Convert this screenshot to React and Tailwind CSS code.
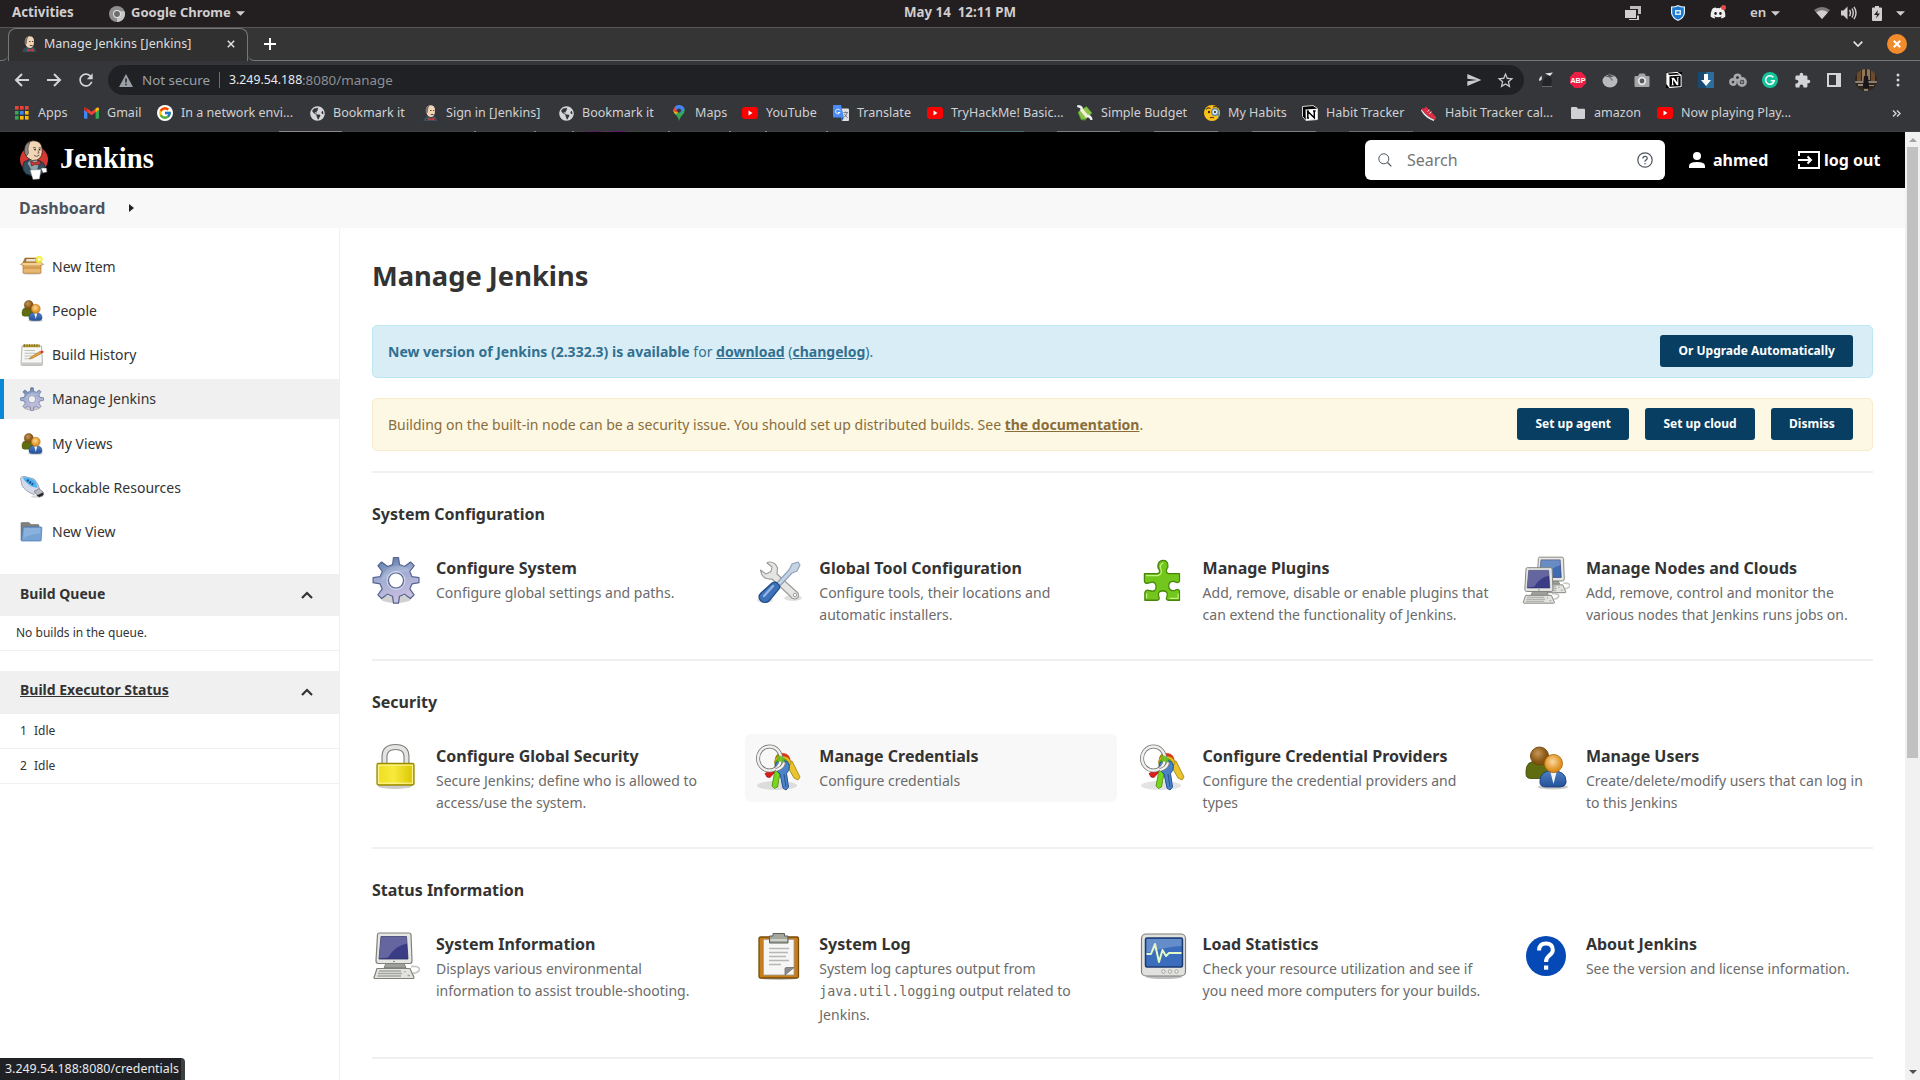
import React from "react";
import { FcGoogle } from "react-icons/fc";
import { FaGlobeAmericas, FaDiscord } from "react-icons/fa";
import { SiNotion } from "react-icons/si";
import { MdExtension, MdRefresh, MdSend, MdStarBorder } from "react-icons/md";

/* ---------- Browser icons ---------- */

function Butler({ className }) {
  return (
    <svg viewBox="0 0 28 40" className={className}>
      <ellipse cx="14" cy="19.500" rx="14" ry="13.500" fill="#d33833" />
      <path d="M4 22 Q2 26 3 30 L6 34 L12 36 L22 34 L25 27 Q25 23 20 21 L10 19Z" fill="#335061" stroke="#16202c" strokeWidth="0.700" />
      <path d="M7.500 23 L11 20 L17 20 L19 23 L17 30 L12 31Z" fill="#8fa3ad" />
      <path d="M5 9 Q5 1.500 13 0.700 Q21 0.500 22 8 Q23.500 17 17 20 Q12 22 8 18 Q4 15 5 9Z" fill="#f0d6b7" stroke="#2b2420" strokeWidth="0.800" />
      <path d="M4.700 13 Q3.500 4 10 2 Q8 6 8 9 L8.500 13 Q7.500 15 6.500 16Z" fill="#8b8b86" stroke="#2b2420" strokeWidth="0.500" />
      <path d="M13 8 Q14.500 7 16 8 M18.500 8 Q20 7.200 21 8.200" stroke="#4a352a" strokeWidth="0.800" fill="none" />
      <circle cx="15" cy="9.600" r="0.900" fill="#222" />
      <circle cx="19.600" cy="9.600" r="0.900" fill="#222" />
      <path d="M14 15.500 Q17 17.500 19.500 15 M18 10.500 L19 13 L17.500 13.200" stroke="#5b3a2c" strokeWidth="0.800" fill="none" />
      <path d="M10.500 21 L15 23 L20 20.500 L20.300 25 L15.300 24.300 L11.500 26Z" fill="#d33833" stroke="#5e0d0d" strokeWidth="0.600" />
      <path d="M10 30 L21 29.500 L19.500 39 L13 39.500Z" fill="#fff" stroke="#777" strokeWidth="0.500" />
      <path d="M21 28 L26.500 28 L27 32 L23 33Z" fill="#fff" stroke="#555" strokeWidth="0.500" />
    </svg>
  );
}

const ButlerSmall = () => (
  <svg viewBox="0 0 16 16" className="size-4">
    <path d="M1.500 16 Q2 12 6 11 L12 11 Q15 12 15 16Z" fill="#335061" />
    <path d="M4 5.500 Q4 0.500 8.500 0.300 Q13 0.500 13 5 Q13.300 11.500 9 12 Q4.500 11.500 4 5.500Z" fill="#f0d6b7" />
    <path d="M3.600 7.500 Q3 1.500 7.500 0.500 Q6 3 6 5 L5.700 8Z" fill="#77736c" />
    <path d="M8 5.500h1.500M11 5.500h1.300M8.800 9.500h2.700" stroke="#4a352a" strokeWidth="0.900" />
    <path d="M6 12.500 L9 13.700 L12.500 12.300 L12.500 15.500 L9 14.500 L6.500 15.800Z" fill="#d33833" />
  </svg>
);

const AppsGrid = () => {
  const colors = ["#ea4335", "#ea4335", "#ea4335", "#34a853", "#4285f4", "#fbbc04", "#34a853", "#fbbc04", "#fbbc04"];
  return (
    <svg viewBox="0 0 14 14" className="size-3.5">
      {colors.map((c, i) => (
        <rect key={i} x={(i % 3) * 5} y={Math.floor(i / 3) * 5} width="3.600" height="3.600" fill={c} />
      ))}
    </svg>
  );
};

const Gmail = () => (
  <svg viewBox="0 0 16 12" className="h-3 w-[15px]">
    <path d="M0 1.500V11Q0 12 1 12H3.600V5Z" fill="#4285f4" />
    <path d="M16 1.500V11Q16 12 15 12H12.400V5Z" fill="#34a853" />
    <path d="M0 1.500Q0.500-0.300 2.300 0.300L8 4.600 13.700 0.300Q15.500-0.300 16 1.500V2.600L8 8.500 0 2.600Z" fill="#ea4335" />
    <path d="M12.400 1.300 13.700 0.300Q15.500-0.300 16 1.500V2.600L12.400 5.300Z" fill="#fbbc04" />
    <path d="M0 2.600 3.600 5.200V1.300L2.300 0.300Q0.500-0.300 0 1.500Z" fill="#c5221f" />
  </svg>
);

const GoogleDot = () => (
  <span className="flex size-4 items-center justify-center rounded-full bg-white">
    <FcGoogle className="size-3.5" />
  </span>
);

const Globe = () => <FaGlobeAmericas className="size-[15px] text-[#d5d6d8]" />;

const MapsPin = () => (
  <svg viewBox="0 0 12 16" className="h-4 w-3">
    <path d="M6 16Q5.500 12.500 3 10 0 7 0.400 5L6 5.500 11.700 4Q12.300 7 9 10.500 6.500 13 6 16Z" fill="#34a853" />
    <path d="M0.400 4.500Q0 7 2.500 9.500L7 5Z" fill="#fbbc04" />
    <path d="M1.600 2Q0.300 3.500 0.300 5.500L3 7.500 6 5Z" fill="#ea4335" />
    <path d="M1.600 2Q3.500-0.300 6.500 0.100 10.500 0.700 11.700 4L7.500 8 3.500 5Z" fill="#4285f4" />
    <circle cx="6" cy="5.600" r="2.100" fill="#35363a" />
  </svg>
);

const YouTube = () => (
  <svg viewBox="0 0 16 12" className="h-3 w-4">
    <rect width="16" height="12" rx="3" fill="#f00" />
    <path d="M6.500 3.500V8.500L10.500 6Z" fill="#fff" />
  </svg>
);

const TranslateIcon = () => (
  <svg viewBox="0 0 16 16" className="size-4">
    <path d="M6 3.500H15Q16 3.500 16 4.500V15Q16 16 15 16H9Z" fill="#e0e0e0" />
    <path d="M1 0H8L11 12.500H1Q0 12.500 0 11.500V1Q0 0 1 0Z" fill="#4b8bf4" />
    <path d="M8 12.500H11L9 16Z" fill="#1a56c4" />
    <path d="M7 5.500A2.300 2.300 0 1 0 7 7.500H4.800" stroke="#fff" strokeWidth="1" fill="none" />
    <path d="M10.500 7.500H15M12.700 6.500V7.500M14.200 7.500Q13.500 10.500 11 12.500M11.500 9Q12.500 11.500 14.700 12.600" stroke="#6a7480" strokeWidth="0.900" fill="none" />
  </svg>
);

const Money = () => (
  <svg viewBox="0 0 16 16" className="size-4">
    <path d="M1 8 9 2 15 8 8 15.500 4 15Z" fill="#5c9e31" />
    <path d="M1 7 7 3 9.500 1.500 15 8 8 14.500 4 14Z" fill="#8bc34a" stroke="#3f7d20" strokeWidth="0.500" />
    <path d="M4 4 10.500 12" stroke="#f3f0d8" strokeWidth="3.400" />
    <path d="M0.500 0Q5 0 6 3L4 5Q3.500 2.500 0 2ZM15.500 15Q15.500 10.500 11 9.500L10 12Q12.500 12.500 13.500 15Z" fill="#eef2f4" />
  </svg>
);

const Monocle = () => (
  <svg viewBox="0 0 16 16" className="size-4">
    <circle cx="8" cy="8" r="8" fill="#fcc21b" />
    <path d="M2 4.500Q4 2 6.500 3.500M9 2Q12 0.500 14.500 3" stroke="#5d3b1a" strokeWidth="1.200" fill="none" />
    <circle cx="5" cy="7" r="1.200" fill="#3e2a12" />
    <circle cx="11" cy="7" r="3.300" fill="#cfe6f5" stroke="#557f9f" strokeWidth="1.200" />
    <circle cx="11" cy="7" r="1.100" fill="#3e2a12" />
    <path d="M6 13Q8 11.500 10 13" stroke="#5d3b1a" strokeWidth="1.100" fill="none" />
    <path d="M14 8Q15.500 11 14 14" stroke="#557f9f" strokeWidth="0.800" fill="none" />
  </svg>
);

/* White page cube with a bold N on its front face */
const Notion = () => (
  <svg viewBox="0 0 16 16" className="size-4">
    <path d="M0.500 1.500L11 0.500L15.500 3.500V14.500L4 15.500L0.500 11.500Z" fill="#000" stroke="#e9e9e9" strokeWidth="0.900" />
    <path d="M3.500 4.500L15 3.800V14.500L3.800 15.200Z" fill="#fff" />
    <path d="M5.800 13V6.500L12.300 12.800V5.800M4.800 6.300H7M11 6H13.600M4.800 13H7" stroke="#000" strokeWidth="1.500" fill="none" />
  </svg>
);

const Shoe = () => (
  <svg viewBox="0 0 16 16" className="size-4">
    <path d="M1 3Q3 4.500 5 1.500L15 12Q15.500 15 12.500 14.500Q6 11 1.500 6Q0 4 1 3Z" fill="#dd2e44" />
    <path d="M0.500 4.500Q6 12 13.500 14.800L12.500 16Q4 13 0 5.500Z" fill="#e6eaee" />
    <path d="M6.500 6.500 8.500 4.800M8.500 8.500 10.500 6.800" stroke="#fff" strokeWidth="0.900" />
  </svg>
);

const FolderGrey = () => (
  <svg viewBox="0 0 14 12" className="h-3 w-3.5">
    <path d="M0 1Q0 0 1 0H5.500L7 1.800H13Q14 1.800 14 2.800V11Q14 12 13 12H1Q0 12 0 11Z" fill="#cfd0d2" />
  </svg>
);

const bookmarks = [
  ["Apps", AppsGrid, "w-[69px]"],
  ["Gmail", Gmail, "w-[74px]"],
  ["In a network envi...", GoogleDot, "w-[152px]"],
  ["Bookmark it", Globe, "w-[113px]"],
  ["Sign in [Jenkins]", ButlerSmall, "w-[136px]"],
  ["Bookmark it", Globe, "w-[113px]"],
  ["Maps", MapsPin, "w-[71px]"],
  ["YouTube", YouTube, "w-[91px]"],
  ["Translate", TranslateIcon, "w-[94px]"],
  ["TryHackMe! Basic...", YouTube, "w-[150px]"],
  ["Simple Budget", Money, "w-[127px]"],
  ["My Habits", Monocle, "w-[98px]"],
  ["Habit Tracker", Notion, "w-[119px]"],
  ["Habit Tracker cal...", Shoe, "w-[149px]"],
  ["amazon", FolderGrey, "w-[87px]"],
  ["Now playing Play...", YouTube, "w-[140px]"],
];

/* ---------- Extensions ---------- */

const extensions = [
  <svg key="bird" viewBox="0 0 16 16" className="size-4">
    <path d="M5 15Q3 12 6 7Q8 3 12 4L14 8 13 15Z" fill="#232427" />
    <path d="M1 9Q1 5 4 4L3.500 8ZM7 1.500 15 0.500 12 4Z" fill="#e4e4e4" />
    <path d="M4 14.500H14" stroke="#77797c" strokeWidth="0.800" />
  </svg>,
  <svg key="abp" viewBox="0 0 16 16" className="size-4">
    <path d="M4.700 0H11.300L16 4.700V11.300L11.300 16H4.700L0 11.300V4.700Z" fill="#ed1e45" />
    <text x="8" y="10.700" textAnchor="middle" fontSize="7.200" fontWeight="700" fill="#fff" fontFamily="Liberation Sans, sans-serif">ABP</text>
  </svg>,
  <svg key="tomato" viewBox="0 0 16 16" className="size-4">
    <ellipse cx="8" cy="9" rx="7.500" ry="6.500" fill="#b9babb" />
    <path d="M8 5.500 3 4.500 6 3.500 7 0.500 9 3.200 13 4Z" fill="#56585b" />
    <path d="M8 5.500 10.500 8.500" stroke="#77797c" strokeWidth="1.300" />
  </svg>,
  <svg key="camera" viewBox="0 0 16 16" className="size-4">
    <path d="M1.500 4H4L5.500 1.500H10.500L12 4H14.500Q15.500 4 15.500 5V14Q15.500 15 14.500 15H1.500Q0.500 15 0.500 14V5Q0.500 4 1.500 4Z" fill="#a4a5a7" />
    <circle cx="8" cy="9" r="4.200" fill="#e4e4e4" />
    <circle cx="8" cy="9" r="2.400" fill="#55575a" />
  </svg>,
  <SiNotion key="notion" className="size-4 bg-black text-white" />,
  <svg key="down" viewBox="0 0 16 16" className="size-4">
    <rect width="16" height="16" fill="#2a6f9c" />
    <path d="M0 0H8V16H0Z" fill="#174a6e" />
    <path d="M6 2H10V8H13L8 14 3 8H6Z" fill="#fff" />
  </svg>,
  <svg key="rings" viewBox="0 0 18 16" className="h-4 w-[18px]" fill="none" stroke="#a6a8aa" strokeWidth="2.600">
    <circle cx="4" cy="10" r="2.600" />
    <circle cx="8.500" cy="5.500" r="2.800" />
    <circle cx="13" cy="10" r="3.600" />
    <circle cx="13" cy="10" r="1" strokeWidth="1" />
  </svg>,
  <svg key="grammarly" viewBox="0 0 16 16" className="size-4">
    <circle cx="8" cy="8" r="8" fill="#15c39a" />
    <path d="M11.300 5.300A4.300 4.300 0 1 0 12.200 8.700H8.700" stroke="#fff" strokeWidth="1.500" fill="none" />
  </svg>,
  <MdExtension key="puzzle" className="size-[17px] text-[#d3d4d6]" />,
  <svg key="panel" viewBox="0 0 14 14" className="size-3.5">
    <path d="M1 1H13V13H1Z" fill="none" stroke="#d3d4d6" strokeWidth="2" />
    <path d="M9 1H13V13H9Z" fill="#d3d4d6" />
  </svg>,
  <svg key="avatar" viewBox="0 0 22 22" className="size-[22px]">
    <clipPath id="avatarClip"><circle cx="11" cy="11" r="11" /></clipPath>
    <g clipPath="url(#avatarClip)">
      <rect width="22" height="22" fill="#33261b" />
      <path d="M2 0H6V12H2ZM16 0H20V12H16Z" fill="#6b4a2e" />
      <path d="M7 0H10V12H7ZM12 0H15V11H12Z" fill="#8f7759" />
      <path d="M0 12H22V14H0Z" fill="#8a8078" />
      <path d="M9 7H13L14 19H8Z" fill="#17151a" />
      <path d="M3 15H8V17H3ZM14 16H19V17H14ZM9 20H13V22H9Z" fill="#8f867c" />
    </g>
  </svg>,
  <svg key="dots" viewBox="0 0 4 16" className="h-4 w-1" fill="#d3d4d6">
    <circle cx="2" cy="3" r="1.500" /><circle cx="2" cy="8" r="1.500" /><circle cx="2" cy="13" r="1.500" />
  </svg>,
];

/* ---------- Jenkins icons, 48-unit grid ---------- */

function Gear({ className }) {
  return (
    <svg viewBox="0 0 48 48" className={className}>
      <defs>
        <linearGradient id="gearFill" x1="0" y1="0" x2="0.300" y2="1">
          <stop offset="0" stopColor="#4f709f" /><stop offset="0.450" stopColor="#9dabd0" /><stop offset="1" stopColor="#c9bfe0" />
        </linearGradient>
      </defs>
      <ellipse cx="24" cy="43" rx="15" ry="4" fill="#000" opacity="0.180" />
      <path
        fillRule="evenodd"
        d="M21.500 1.500h5l1 7 5 2 6-4.500 3.700 3.700-4.400 5.800 2.200 5.200 7 1v5l-7 1.200-2.200 5 4.300 5.900-3.700 3.700-5.900-4.300-5 2-1 7h-5l-1-7-5-2-6 4.300-3.600-3.600 4.300-6-2.100-5-7-1.200v-5l7-1 2.200-5.200-4.400-5.800 3.700-3.700 6 4.500 5-2zM24 17a7.500 7.500 0 1 0 0 15a7.500 7.500 0 1 0 0-15z"
        fill="url(#gearFill)" stroke="#55648f" strokeWidth="1.200" strokeLinejoin="round"
      />
      <circle cx="24" cy="24.500" r="9" fill="none" stroke="#e0e2ef" strokeWidth="1" opacity="0.800" />
      <path d="M10 25Q18 17 38 15Q34 9 24 10Q12 11 10 25Z" fill="#fff" opacity="0.150" />
    </svg>
  );
}

function People({ className }) {
  return (
    <svg viewBox="0 0 48 48" className={className}>
      <defs>
        <radialGradient id="headBrown" cx="0.400" cy="0.350"><stop offset="0" stopColor="#c79556" /><stop offset="1" stopColor="#85530f" /></radialGradient>
        <radialGradient id="headOrange" cx="0.450" cy="0.400"><stop offset="0" stopColor="#f9d9a0" /><stop offset="1" stopColor="#e08f1c" /></radialGradient>
        <linearGradient id="shirtBlue" x1="0" y1="0" x2="0" y2="1"><stop offset="0" stopColor="#4f80c4" /><stop offset="1" stopColor="#24529a" /></linearGradient>
      </defs>
      <ellipse cx="31" cy="43" rx="15" ry="2.500" fill="#000" opacity="0.200" />
      <path d="M4 27Q4 17 15 17Q26 17 26 27V31Q25 34.500 20 34.500H9Q4 34.500 4 30Z" fill="#5f6c10" stroke="#3d4708" strokeWidth="0.800" />
      <circle cx="17.500" cy="12" r="9" fill="url(#headBrown)" stroke="#6b430d" strokeWidth="0.900" />
      <path d="M18 37Q18 27 30 26.500Q44 27 44 37V39Q43 43 38 43H24Q18.500 43 18 39Z" fill="url(#shirtBlue)" stroke="#1b4079" strokeWidth="0.900" />
      <path d="M28.500 28.500L31.500 40L34.500 28.500Z" fill="#f2f4f8" />
      <circle cx="31.500" cy="19.500" r="9" fill="url(#headOrange)" stroke="#b36a0d" strokeWidth="0.900" />
    </svg>
  );
}

const NewItem = ({ className }) => (
  <svg viewBox="0 0 48 48" className={className}>
    <ellipse cx="24" cy="37" rx="19" ry="2.500" fill="#000" opacity="0.150" />
    <path d="M6 15L42 15V35Q42 36.500 40 36.500H8Q6 36.500 6 35Z" fill="#e8b872" stroke="#a86a1f" strokeWidth="1.300" />
    <path d="M6 24H42V28H6Z" fill="#c98b3c" opacity="0.600" />
    <path d="M10 6H38L42 15H6Z" fill="#a9762f" stroke="#8a5a1b" strokeWidth="1" />
    <path d="M13 8H30L31 13H12Z" fill="#e7e2da" />
    <path d="M6 15 1 19 10 22H38L47 19 42 15Z" fill="#f3cf94" stroke="#a86a1f" strokeWidth="1.100" />
    <circle cx="38" cy="9" r="7.500" fill="#f7f33a" opacity="0.850" />
    <circle cx="38" cy="9" r="3" fill="#fffed8" />
  </svg>
);

const History = ({ className }) => (
  <svg viewBox="0 0 48 48" className={className}>
    <path d="M4 6H43L45 42Q45 45 42 45H5Q2 45 2 42Z" fill="#f6f6f4" stroke="#8c8c88" strokeWidth="1.300" />
    <path d="M2.500 39H45V42Q45 45 42 45H5Q2 45 2 42Z" fill="#c9c9c5" />
    <path d="M6 3H40V8.500H6Z" fill="#b4992e" />
    <path d="M9 2V8M14 2V8M19 2V8M24 2V8M29 2V8M34 2V8" stroke="#7d6a1c" strokeWidth="1.500" />
    <path d="M9 15H30M9 20.500H34M9 26H24M9 31.500H18" stroke="#b9b9b5" strokeWidth="1.800" />
    <path d="M18 32L23 27L40 17L43 21L24 31Z" fill="#e8a33d" stroke="#8a5a1b" strokeWidth="1" />
    <path d="M40 17L44 15Q48 15 47 19L43 21Z" fill="#d8372b" />
  </svg>
);

const Usb = ({ className }) => (
  <svg viewBox="0 0 48 48" className={className}>
    <ellipse cx="34" cy="41" rx="12" ry="2.500" fill="#000" opacity="0.150" />
    <path d="M1 4Q3 0 10 1L28 6Q37 14 39 26L28 37Q11 31 4 19Z" fill="#d5daea" stroke="#8a91a5" strokeWidth="1.500" />
    <path d="M5 3Q16 1 28 8Q35 15 35 24L23 21Q10 13 5 3Z" fill="#4fb2f1" />
    <path d="M14 8L26 17" stroke="#1c4c86" strokeWidth="4.500" strokeDasharray="4 2" />
    <path d="M28 31L38 25L47 33L46 39L38 42Z" fill="#b9bbc2" stroke="#4c4c50" strokeWidth="1" />
    <path d="M33 39L46 33L47 38L38 42Z" fill="#26262a" />
  </svg>
);

const FolderBlue = ({ className }) => (
  <svg viewBox="0 0 48 48" className={className}>
    <path d="M2 7Q2 5 4 5H18L22 9H36Q38 9 38 11V40H2Z" fill="#80817d" stroke="#5c5d5a" strokeWidth="1" />
    <path d="M8 14H42Q44 14 43.700 16L42.500 40Q42.500 42 40.500 42H4Q2 42 2.500 40L6 16Q6.200 14 8 14Z" fill="#76a3d4" stroke="#3f71ad" strokeWidth="1.300" />
    <path d="M9 16H41L40 27Q24 27 7 36Z" fill="#9fc1e6" opacity="0.500" />
  </svg>
);

const Tools = ({ className }) => (
  <svg viewBox="0 0 48 48" className={className}>
    <ellipse cx="10" cy="44" rx="8" ry="3" fill="#000" opacity="0.120" />
    <ellipse cx="38" cy="42" rx="9" ry="3" fill="#000" opacity="0.120" />
    <path d="M14 6Q20 5.500 22.500 12L22 18L43 37Q45 42 40 43Q37 43 35 40L17 23Q7 24 5.500 14L11 18L16 15.500L17 11L12 7Q13 6 14 6Z" fill="#e5e6e4" stroke="#999b96" strokeWidth="1.100" strokeLinejoin="round" />
    <circle cx="40" cy="39" r="1.700" fill="#fff" stroke="#888a85" strokeWidth="0.800" />
    <path d="M20 29L34 14L37 8L43 6L45 9L42 15L37 17L23 32Z" fill="#c5d3e3" stroke="#8aa0ba" strokeWidth="1.100" strokeLinejoin="round" />
    <path d="M17 27Q21 25 23 28Q26 30 24 33L14 45Q10 48 6 45Q2 41 6 37Z" fill="#3d71b8" stroke="#1f4a87" strokeWidth="1.200" />
    <path d="M18 30L9 40" stroke="#8fb4e4" strokeWidth="2.500" strokeLinecap="round" />
  </svg>
);

const Plugin = ({ className }) => (
  <svg viewBox="0 0 48 48" className={className}>
    <g transform="translate(4.500 1.500) scale(0.900 0.950)">
      <path
        d="M1 17H14.500Q19 17 17.500 13Q15 10 16.500 6.500Q18 3 22 3Q26 3 27 7Q28 10 25.500 13Q25 17 28.500 17H40V25Q38.500 27.500 35 25.500Q28 24 28 30Q28.500 36 35 34.500Q38.500 32.500 40 35V45H28Q24 45 26 41Q28 35.500 21.500 35Q15 35.500 17 41Q18.500 45 15 45H1.500V37Q2.500 33 7 35Q14 37 14 30.500Q13.500 24.500 7 26.500Q2 28.500 1 25Z"
        fill="#73c61c" stroke="#46860a" strokeWidth="1.400" strokeLinejoin="round"
      />
      <path d="M3 19H16Q21 18 19.500 12.500Q17 8 22 5.500M38.500 38V43H29M3.500 38V43" stroke="#c4f283" strokeWidth="1.300" fill="none" />
    </g>
  </svg>
);

function MonitorShape({ screen }) {
  return (
    <g>
      <path d="M4 37H37L41 46Q41 47 40 47H2Q1 47 1 46Z" fill="#e3e3e0" stroke="#7f817c" strokeWidth="1.200" />
      <path d="M6 39.500H28M5 42H29M4.500 44.500H28M32 39.500V41M34.500 44H37" stroke="#a3a5a0" strokeWidth="1.300" />
      <path d="M13 32H31L33 36H11Z" fill="#9ea09b" stroke="#74766f" strokeWidth="0.800" />
      <path d="M6 1.500H36Q37.500 1.500 38 3L39 29Q39 32 37 32H5Q3 32 3 29L4.500 3Q5 1.500 6 1.500Z" fill="#e6e6e3" stroke="#7f817c" strokeWidth="1.200" />
      <path d="M8 5H33.500L35 27.500H6Z" fill={screen} stroke="#2c2c62" strokeWidth="0.800" />
      <path d="M8 5H33.500L34 12Q22 14 15 26L6 27Z" fill="#fff" opacity="0.220" />
      <circle cx="21" cy="30" r="0.700" fill="#555" />
    </g>
  );
}

const Computer = ({ className }) => (
  <svg viewBox="0 0 48 48" className={className}>
    <g transform="translate(1 -0.500)">
      <path d="M38 35Q46 34 46.500 38Q46 41 40 42" fill="none" stroke="#c8c9c5" strokeWidth="1.800" />
      <MonitorShape screen="#3a3c86" />
    </g>
  </svg>
);

const Nodes = ({ className }) => (
  <svg viewBox="0 0 48 48" className={className}>
    <g transform="translate(13 0) scale(0.750 0.780)">
      <path d="M38 35Q46 34 46.500 38Q46 41 40 42" fill="none" stroke="#c8c9c5" strokeWidth="2" />
      <MonitorShape screen="#3f6cb5" />
    </g>
    <g transform="translate(0.500 10.500) scale(0.780)">
      <path d="M38 35Q46 34 46.500 38Q46 41 40 42" fill="none" stroke="#c8c9c5" strokeWidth="2" />
      <MonitorShape screen="#3a3c86" />
    </g>
  </svg>
);

const Lock = ({ className }) => (
  <svg viewBox="0 0 48 48" className={className}>
    <defs>
      <linearGradient id="lockFill"><stop offset="0" stopColor="#efdd1f" /><stop offset="0.450" stopColor="#f7ea3c" /><stop offset="1" stopColor="#d9c400" /></linearGradient>
    </defs>
    <ellipse cx="23" cy="42" rx="17" ry="3" fill="#000" opacity="0.200" />
    <path d="M12.500 21V12Q13 3 23.500 3Q34 3 34.500 12V21" fill="none" stroke="#7d7f7a" strokeWidth="6" />
    <path d="M12.500 21V12Q13 3 23.500 3Q34 3 34.500 12V21" fill="none" stroke="#e4e5e2" strokeWidth="3.800" />
    <rect x="5" y="19.500" width="37" height="21.500" rx="1.500" fill="url(#lockFill)" stroke="#9a8a00" strokeWidth="1.300" />
    <rect x="6.600" y="21.200" width="33.800" height="18" fill="none" stroke="#fdf8a0" strokeWidth="1" />
  </svg>
);

const Keys = ({ className }) => (
  <svg viewBox="0 0 48 48" className={className}>
    <ellipse cx="22" cy="41.500" rx="20" ry="4.500" fill="#000" opacity="0.110" />
    <g transform="translate(1 0)">
      <path d="M16 26L9 29.500L11 33L14 33.500L20 27Z" fill="#e01b1b" stroke="#8f0d0d" strokeWidth="0.700" />
      <path d="M19 16Q19 9 26 9Q34 9 34.500 17Z" fill="#e0341b" />
      <path d="M29 18L36 17L44 33L42 36L38 34Z" fill="#e9c52b" stroke="#9b7c10" strokeWidth="0.800" />
      <path d="M18.500 19Q18 12 26 12Q35 12.500 35 20L31 23Z" fill="#eeb61f" stroke="#a67b10" strokeWidth="0.600" />
      <path d="M19 26L24.500 27L21.500 43L18.500 44.500L16 42Z" fill="#7bd41d" stroke="#46860a" strokeWidth="0.800" />
      <path d="M19 21Q18 14.500 26 14.500Q32 14.500 33 21L30 24Z" fill="#68bd1c" stroke="#46860a" strokeWidth="0.600" />
      <path d="M19 22.500Q19 16.500 26 16.500Q33 16.500 33.500 22.500Q33.500 26.500 30.500 29.500L32.500 43L30 46L27 44L24 30Q19.500 27 19 22.500Z" fill="#4b83c9" stroke="#23508f" strokeWidth="1" />
      <path d="M28 30L30 43" stroke="#23508f" strokeWidth="0.900" />
      <ellipse cx="13.500" cy="14.500" rx="11.500" ry="12" fill="none" stroke="#777975" strokeWidth="4" />
      <ellipse cx="13.500" cy="14.500" rx="11.500" ry="12" fill="none" stroke="#f0f0ee" strokeWidth="2.400" />
      <path d="M20 11Q26 11 27 14L29 19Q29 21 27 20L24 17L22 18Z" fill="#68bd1c" opacity="0.900" />
      <path d="M28 18.500Q27 24 20 26" fill="none" stroke="#777975" strokeWidth="3.600" />
      <path d="M28 18.500Q27 24 20 26" fill="none" stroke="#f0f0ee" strokeWidth="2.200" />
    </g>
  </svg>
);

const Clipboard = ({ className }) => (
  <svg viewBox="0 0 48 48" className={className}>
    <ellipse cx="24" cy="46.500" rx="18" ry="1.500" fill="#000" opacity="0.250" />
    <rect x="4" y="5" width="39.500" height="41" rx="1.500" fill="#c47f1a" stroke="#7a4a0a" strokeWidth="1.300" />
    <path d="M8.500 7.500H39V43H8.500Z" fill="#f6f6f6" stroke="#a0a09c" strokeWidth="0.800" />
    <path d="M14 16.500H34M14 20.500H33M14 24.500H31M14 28.500H34M14 32.500H26" stroke="#b7b7b5" strokeWidth="1.700" />
    <path d="M30 43V36.500Q30 35.500 31.500 35.500H39Z" fill="#8d8d8b" stroke="#5f5f5c" strokeWidth="0.700" />
    <path d="M18 4V1.500H29.500V4H33V11H14.500V4Z" fill="#a4a79e" stroke="#5d5f58" strokeWidth="1" />
    <path d="M15.500 8H32" stroke="#d5d7d0" strokeWidth="1.800" />
  </svg>
);

const Monitor = ({ className }) => (
  <svg viewBox="0 0 48 48" className={className}>
    <ellipse cx="25" cy="45" rx="18" ry="2" fill="#000" opacity="0.250" />
    <rect x="2.500" y="2" width="44" height="42" rx="4.500" fill="#e1e2df" stroke="#7d7f7a" strokeWidth="1.200" />
    <rect x="6.500" y="6" width="37" height="29" rx="1.500" fill="#3a6dbb" stroke="#1b3a70" strokeWidth="1.500" />
    <path d="M7.500 7H42.500V14Q25 15 7.500 21Z" fill="#fff" opacity="0.220" />
    <path d="M7.500 22H12L16 12L20 30L23.500 18L27 24L30 21H42.500" fill="none" stroke="#e4f9c4" strokeWidth="2" strokeLinejoin="round" />
    <g fill="#f4f4f2" stroke="#8d8f8a" strokeWidth="0.800"><circle cx="24.500" cy="39.500" r="1.700" /><circle cx="31" cy="39.500" r="1.700" /><circle cx="37.500" cy="39.500" r="1.700" /></g>
  </svg>
);

const About = ({ className }) => (
  <svg viewBox="0 0 48 48" className={className}>
    <circle cx="24" cy="24" r="20" fill="#0449b5" />
    <path d="M17.100 18.500Q17.100 11.500 24 11.500Q30.800 11.500 30.800 18Q30.800 21 27.300 23.500Q24 26 24 30" fill="none" stroke="#fff" strokeWidth="4" />
    <rect x="22" y="33.500" width="4.200" height="4.200" fill="#fff" />
  </svg>
);

/* ---------- Data ---------- */

const tasks = [
  ["New Item", NewItem],
  ["People", People],
  ["Build History", History],
  ["Manage Jenkins", Gear],
  ["My Views", People],
  ["Lockable Resources", Usb],
  ["New View", FolderBlue],
];

const sections = [
  {
    title: "System Configuration",
    height: "h-[188px]",
    items: [
      ["Configure System", ["Configure global settings and paths."], Gear],
      ["Global Tool Configuration", ["Configure tools, their locations and", "automatic installers."], Tools],
      ["Manage Plugins", ["Add, remove, disable or enable plugins that", "can extend the functionality of Jenkins."], Plugin],
      ["Manage Nodes and Clouds", ["Add, remove, control and monitor the", "various nodes that Jenkins runs jobs on."], Nodes],
    ],
  },
  {
    title: "Security",
    height: "h-[188px]",
    items: [
      ["Configure Global Security", ["Secure Jenkins; define who is allowed to", "access/use the system."], Lock],
      ["Manage Credentials", ["Configure credentials"], Keys, true],
      ["Configure Credential Providers", ["Configure the credential providers and", "types"], Keys],
      ["Manage Users", ["Create/delete/modify users that can log in", "to this Jenkins"], People],
    ],
  },
  {
    title: "Status Information",
    height: "h-[210px]",
    items: [
      ["System Information", ["Displays various environmental", "information to assist trouble-shooting."], Computer],
      [
        "System Log",
        [
          "System log captures output from",
          <React.Fragment key="c"><code className="font-['DejaVu_Sans_Mono',monospace] text-[13.3px]">java.util.logging</code> output related to</React.Fragment>,
          "Jenkins.",
        ],
        Clipboard,
      ],
      ["Load Statistics", ["Check your resource utilization and see if", "you need more computers for your builds."], Monitor],
      ["About Jenkins", ["See the version and license information."], About],
    ],
  },
];

/* Desktop thumbnails peeking out under the toolbar: [gap, width, colour class] */
const slivers = [
  ["ml-[279px]", "w-[63px]", "bg-[#8a8a86]"],
  ["ml-[132px]", "w-[2px]", "bg-[#8a8a86]"],
  ["ml-[58px]", "w-[2px]", "bg-[#8a8a86]"],
  ["ml-[36px]", "w-[2px]", "bg-[#8a8a86]"],
  ["ml-[11px]", "w-[17px]", "bg-[#5c1d66]"],
  ["ml-[8px]", "w-[16px]", "bg-[#5c1d66]"],
  ["ml-[42px]", "w-[2px]", "bg-[#8a8a86]"],
  ["ml-[59px]", "w-[2px]", "bg-[#8a8a86]"],
  ["ml-[34px]", "w-[2px]", "bg-[#8a8a86]"],
  ["ml-[59px]", "w-[2px]", "bg-[#8a8a86]"],
  ["ml-[132px]", "w-[64px]", "bg-[#4a6e74]"],
  ["ml-[33px]", "w-[63px]", "bg-[#7d7f7a]"],
  ["ml-[34px]", "w-[64px]", "bg-[#7d7f7f]"],
  ["ml-[34px]", "w-[64px]", "bg-[#7d7f7a]"],
  ["ml-[33px]", "w-[64px]", "bg-[#6d6f6c]"],
];

/* ---------- Layout pieces ---------- */

function Slot({ width, children }) {
  return <div className={`flex shrink-0 items-center justify-center ${width}`}>{children}</div>;
}

const TriDown = () => (
  <svg viewBox="0 0 10 5" className="h-[5px] w-[9px]"><path d="M0 0H10L5 5Z" fill="#d0cecf" /></svg>
);

function TopBar() {
  return (
    <div className="flex h-[27px] items-center bg-[#231f20] pb-px text-[13.3px] font-bold text-[#d0cecf]">
      <div className="w-[109px] pl-3">Activities</div>
      <div className="flex w-[795px] items-center">
        <svg viewBox="0 0 16 16" className="mt-px size-4">
          <circle cx="8" cy="8" r="8" fill="#8e8e8e" />
          <path d="M8 16A8 8 0 0 0 15.500 5.200H8Z" fill="#c6c6c6" />
          <circle cx="8" cy="8" r="3.900" fill="#e6e6e6" />
          <circle cx="8" cy="8" r="2.900" fill="#6b6b6b" />
        </svg>
        <span className="ml-1.5 mr-[5px] text-[13px]">Google Chrome</span>
        <TriDown />
      </div>
      <div className="whitespace-pre">May 14  12:11 PM</div>
      <div className="ml-auto flex items-center">
        <Slot width="w-[45px]">
          <svg viewBox="0 0 16 14" className="h-3.5 w-4"><path d="M5 0H16V8H13V3H5Z" fill="#bdbbbc" /><path d="M0 4H11V12H0ZM12 9.500H14V14H4V13H12Z" fill="#d0cecf" /></svg>
        </Slot>
        <Slot width="w-[45px]">
          <svg viewBox="0 0 14 16" className="h-4 w-3.5"><path d="M0 1.500Q4 1.500 7 0Q10 1.500 14 1.500V8Q13.500 13 7 16Q0.500 13 0 8Z" fill="#e8f2fb" /><path d="M1.200 2.500Q4.500 2.500 7 1.300Q9.500 2.500 12.800 2.500V8Q12.500 12.300 7 14.800Q1.500 12.300 1.200 8Z" fill="#1d78cf" /><path d="M4 5H10V10H4ZM5.500 6.500V8.500H8.500V6.500Z" fill="#d8ebfb" fillRule="evenodd" /></svg>
        </Slot>
        <Slot width="w-[36px]">
          <span className="relative"><FaDiscord className="size-4 text-[#efefef]" /><span className="absolute right-0 top-0 size-[5px] rounded-full bg-[#f04747]" /></span>
        </Slot>
        <div className="ml-3.5 flex w-[58px] items-center gap-[5px]"><span className="font-semibold">en</span><TriDown /></div>
        <Slot width="w-[27px]">
          <svg viewBox="0 0 16 12" className="h-3 w-4"><path d="M8 12L0 3Q8-3 16 3Z" fill="#7a7878" /><path d="M8 12L2.200 5.500Q8 1 13.800 5.500Z" fill="#d0cecf" /></svg>
        </Slot>
        <Slot width="w-[28px]">
          <svg viewBox="0 0 16 14" className="h-3.5 w-4"><path d="M0 4.500H2.500L6.500 0.500V13.500L2.500 9.500H0Z" fill="#d0cecf" /><path d="M8.500 4Q10.500 7 8.500 10M11 2.500Q13.500 7 11 11.500M13 0.800Q17 7 13 13.200" fill="none" stroke="#d0cecf" strokeWidth="1.400" /></svg>
        </Slot>
        <Slot width="w-[28px]">
          <svg viewBox="0 0 10 15" className="h-[15px] w-2.5"><path d="M3 0H7V1.500H9Q10 1.500 10 2.500V14Q10 15 9 15H1Q0 15 0 14V2.500Q0 1.500 1 1.500H3Z" fill="#d0cecf" /><path d="M6 4L2 9H5L4 12.500L8 7.500H5.300Z" fill="#231f20" /></svg>
        </Slot>
        <Slot width="w-[18px]"><TriDown /></Slot>
        <span className="w-[11px]" />
      </div>
    </div>
  );
}

function TabStrip() {
  return (
    <div className="flex h-[34px] border-t border-[#575757] bg-[#353535]">
      <div className="w-2 rounded-br-md border-b border-[#767878]" />
      <div className="flex w-[240px] items-center rounded-t-lg border-x border-t border-[#767878] bg-[#303031] pb-[2px] pl-3 text-[12.5px] text-[#dcdddf]">
        <ButlerSmall />
        <span className="ml-[7px] w-[154px] whitespace-nowrap">Manage Jenkins [Jenkins]</span>
        <svg viewBox="0 0 10 10" className="ml-[29px] size-2"><path d="M1 1L9 9M9 1L1 9" stroke="#e4e4e4" strokeWidth="1.800" /></svg>
      </div>
      <div className="flex flex-1 items-center rounded-bl-md border-b border-[#767878]">
        <svg viewBox="0 0 12 12" className="ml-4 size-3"><path d="M6 0V12M0 6H12" stroke="#fff" strokeWidth="1.900" /></svg>
        <svg viewBox="0 0 10 6" className="ml-auto mr-[24px] h-1.5 w-2.5"><path d="M0.700 0.700L5 5L9.300 0.700" fill="none" stroke="#e4e4e4" strokeWidth="1.700" /></svg>
        <span className="mr-[13px] flex size-5 items-center justify-center rounded-full bg-[#f28b2b]">
          <svg viewBox="0 0 8 8" className="size-2"><path d="M0.800 0.800L7.200 7.200M7.200 0.800L0.800 7.200" stroke="#fff" strokeWidth="2" /></svg>
        </span>
      </div>
    </div>
  );
}

function Toolbar() {
  return (
    <div className="flex h-[34px] items-center bg-[#35363a] pr-1.5 pt-1">
      <div className="flex w-[108px] items-center gap-4 pl-[14px] text-[#d3d4d6]">
        <svg viewBox="0 0 16 14" className="h-3.5 w-4"><path d="M15 7H2M8 1L2 7L8 13" fill="none" stroke="currentColor" strokeWidth="2" /></svg>
        <svg viewBox="0 0 16 14" className="h-3.5 w-4"><path d="M1 7H14M8 1L14 7L8 13" fill="none" stroke="currentColor" strokeWidth="2" /></svg>
        <MdRefresh className="-ml-0.5 size-5" />
      </div>
      <div className="mr-1.5 flex h-[30px] w-[1416px] items-center rounded-full bg-[#202124] pl-[11px] pr-[9px]">
        <svg viewBox="0 0 14 13" className="h-[13px] w-3.5"><path d="M7 0L14 13H0Z" fill="#9aa0a6" /><path d="M7 4.500V8.500M7 9.800V11.300" stroke="#202124" strokeWidth="1.500" /></svg>
        <span className="ml-[9px] w-[77px] whitespace-nowrap text-[13.4px] text-[#9aa0a6]">Not secure</span>
        <span className="h-4 w-px bg-[#6b6e72]" />
        <span className="ml-[9px] w-[73px] whitespace-nowrap text-[12.3px] text-[#e8eaed]">3.249.54.188</span>
        <span className="text-[13.4px] text-[#8b9096]">:8080/manage</span>
        <MdSend className="ml-auto size-4 text-[#c8cacd]" />
        <MdStarBorder className="ml-[14px] size-[19px] text-[#c8cacd]" />
      </div>
      {extensions.map((e, i) => <Slot key={i} width="w-8">{e}</Slot>)}
    </div>
  );
}

function Bookmarks() {
  return (
    <div className="flex h-9 items-center bg-[#35363a] pl-[14px] text-[12.55px] text-[#cfd1d4]">
      {bookmarks.map(([label, Icon, width], i) => (
        <div key={i} className={`flex shrink-0 items-center whitespace-nowrap ${width}`}>
          <span className="mr-2 flex w-4 shrink-0 items-center justify-center"><Icon /></span>
          {label}
        </div>
      ))}
      <svg viewBox="0 0 9 7" className="ml-auto mr-[19px] h-[7px] w-[9px]"><path d="M1 0.500L4 3.500L1 6.500M5 0.500L8 3.500L5 6.500" fill="none" stroke="#d3d4d6" strokeWidth="1.400" /></svg>
    </div>
  );
}

function Header() {
  return (
    <header className="flex h-14 items-center bg-black pl-5 pr-[25px] text-white">
      <Butler className="h-10 w-7" />
      <span className="-mt-0.5 ml-3 font-['Liberation_Serif',serif] text-[28.6px] font-bold leading-none">Jenkins</span>
      <div className="ml-auto flex h-10 w-[300px] items-center rounded-md bg-white pl-[13px] pr-3">
        <svg viewBox="0 0 14 14" className="size-3.5" fill="none" stroke="#4d545d"><circle cx="5.800" cy="5.800" r="5" /><path d="M9.500 9.500L13.300 13.300" strokeWidth="1.200" /></svg>
        <span className="ml-[15px] text-base text-[#757575]">Search</span>
        <svg viewBox="0 0 16 16" className="ml-auto size-4" fill="none" stroke="#4d545d"><circle cx="8" cy="8" r="7.200" strokeWidth="1.200" /><path d="M5.800 6.500Q5.800 4.300 8 4.300Q10.200 4.300 10.200 6.300Q10.200 7.500 8.900 8.100Q8 8.600 8 9.700M8 11V12.300" strokeWidth="1.200" /></svg>
      </div>
      <svg viewBox="0 0 16 16" className="ml-6 size-4" fill="#fff"><circle cx="8" cy="4" r="4" /><path d="M0 16V14Q0 10 8 10Q16 10 16 14V16Z" /></svg>
      <span className="ml-2 w-[55px] text-base font-bold">ahmed</span>
      <svg viewBox="0 0 22 18" className="ml-[30px] h-[18px] w-[22px]" fill="none" stroke="#fff" strokeWidth="2"><path d="M1 5V1H21V17H1V13M0 9H13M9.500 5.500L13 9L9.500 12.500" /></svg>
      <span className="ml-[4px] w-14 whitespace-nowrap text-base font-bold">log out</span>
    </header>
  );
}

function Chevron() {
  return <svg viewBox="0 0 12 8" className="mr-[26px] h-2 w-3"><path d="M1 7L6 2L11 7" fill="none" stroke="#333" strokeWidth="2.200" /></svg>;
}

function Sidebar() {
  return (
    <aside className="flex w-[340px] shrink-0 flex-col border-r border-[#f0f0f0] pt-[19px] text-[#333]">
      <div className="flex flex-col gap-[4.15px] text-sm">
        {tasks.map(([label, Icon]) => (
          <div
            key={label}
            className={`flex h-10 items-center border-l-4 pl-4 ${label === "Manage Jenkins" ? "border-[#0b87d8] bg-[#f0f0f0]" : "border-transparent"}`}
          >
            <Icon className="mr-2 size-6" />
            {label}
          </div>
        ))}
      </div>
      <div className="mt-[22.100px] flex h-[42px] items-center justify-between bg-[#f0f0f0] pl-5 text-sm font-bold"><span className="-mt-0.5">Build Queue</span><Chevron /></div>
      <div className="h-[35px] border-b border-[#f0f0f0] pl-4 text-xs leading-[34px]">No builds in the queue.</div>
      <div className="mt-5 flex h-[43px] items-center justify-between bg-[#f0f0f0] pl-5 text-sm font-bold"><span className="-mt-1 underline">Build Executor Status</span><Chevron /></div>
      {[1, 2].map((n) => (
        <div key={n} className="flex h-[35px] border-b border-[#f0f0f0] pl-5 text-xs leading-[33px]"><span className="w-3.5">{n}</span><span>Idle</span></div>
      ))}
    </aside>
  );
}

function Button({ children }) {
  return <button className="-mt-px h-8 rounded-[3px] bg-[#083e61] px-[18.2px] pb-px text-xs font-bold text-white">{children}</button>;
}

function Card({ title, lines, Icon, active }) {
  return (
    <div className={`flex items-start gap-4 self-start rounded-md p-2.5 ${active ? "bg-[#f8f8f8]" : ""}`}>
      <Icon className="size-12 shrink-0" />
      <div className="whitespace-nowrap">
        <div className="text-base font-bold leading-[25px] text-[#333]">{title}</div>
        <div className="-mb-8 pt-px text-sm leading-[22.300px] text-[#6b6b6b]">
          {lines.map((l, i) => <div key={i}>{l}</div>)}
        </div>
      </div>
    </div>
  );
}

function Main() {
  return (
    <main className="flex-1 pl-8 pr-8 text-sm">
      <h1 className="pt-[27px] text-[27.3px] font-bold leading-[42px] text-[#333]">Manage Jenkins</h1>
      <div className="mt-[28px] flex h-[53px] items-center gap-4 rounded-[5px] border border-[#bce8f1] bg-[#d9edf7] pl-[15px] pr-[19px] text-[#31708f]">
        <div className="flex-1"><b>New version of Jenkins (2.332.3) is available</b> for <b className="underline">download</b> (<b className="underline">changelog</b>).</div>
        <Button>Or Upgrade Automatically</Button>
      </div>
      <div className="mt-5 flex h-[53px] items-center gap-4 rounded-[5px] border border-[#faebcc] bg-[#fcf8e3] pl-[15px] pr-[19px] text-[#8a6d3b]">
        <div className="flex-1">Building on the built-in node can be a security issue. You should set up distributed builds. See <b className="underline">the documentation</b>.</div>
        <Button>Set up agent</Button>
        <Button>Set up cloud</Button>
        <Button>Dismiss</Button>
      </div>
      <div className="mt-5">
        {sections.map((s) => (
          <section key={s.title} className={`border-t-2 border-[#f0f0f0] ${s.height}`}>
            <h2 className="pt-[29px] text-base font-bold leading-6 text-[#333]">{s.title}</h2>
            <div className="-ml-2.5 -mr-[11px] mt-5 grid grid-cols-4 gap-x-[11.200px]">
              {s.items.map(([title, lines, Icon, active]) => <Card key={title} title={title} lines={lines} Icon={Icon} active={active} />)}
            </div>
          </section>
        ))}
        <div className="h-0.5 bg-[#f0f0f0]" />
      </div>
    </main>
  );
}

export default function App() {
  return (
    <div className="relative flex h-[1080px] w-[1920px] flex-col overflow-hidden bg-white font-['Noto_Sans',sans-serif]">
      <TopBar />
      <TabStrip />
      <Toolbar />
      <Bookmarks />
      <div className="flex h-px bg-[#3f4042]">
        {slivers.map(([gap, w, c], i) => <span key={i} className={`shrink-0 ${gap} ${w} ${c}`} />)}
      </div>
      <div className="flex min-h-0 flex-1">
        <div className="flex w-[1905px] flex-col">
          <Header />
          <div className="flex h-10 shrink-0 items-center bg-[#f8f8f8] pl-[19px] text-base font-bold text-[#4d545d]">
            Dashboard
            <svg viewBox="0 0 5 8" className="ml-6 h-2 w-[5px]"><path d="M0 0L5 4L0 8Z" fill="#222" /></svg>
          </div>
          <div className="flex min-h-0 flex-1 overflow-hidden">
            <Sidebar />
            <Main />
          </div>
        </div>
        <div className="flex w-[15px] flex-col items-center justify-between bg-[#f1f1f1]">
          <div className="flex flex-col items-center">
            <svg viewBox="0 0 8 4" className="mb-[5px] mt-[6px] h-1 w-2"><path d="M0 4L4 0L8 4Z" fill="#a3a3a3" /></svg>
            <span className="h-[611px] w-[11px] bg-[#c1c1c1]" />
          </div>
          <svg viewBox="0 0 8 4" className="mb-[6px] h-1 w-2"><path d="M0 0L4 4L8 0Z" fill="#505050" /></svg>
        </div>
      </div>
      <div className="absolute bottom-0 left-0 h-[22px] w-[185px] whitespace-nowrap rounded-tr-[4px] border-r-4 border-[#3c4043] bg-[#202124] pl-[5px] text-[12.4px] leading-[21px] text-[#e8eaed]">
        3.249.54.188:8080/credentials
      </div>
    </div>
  );
}
